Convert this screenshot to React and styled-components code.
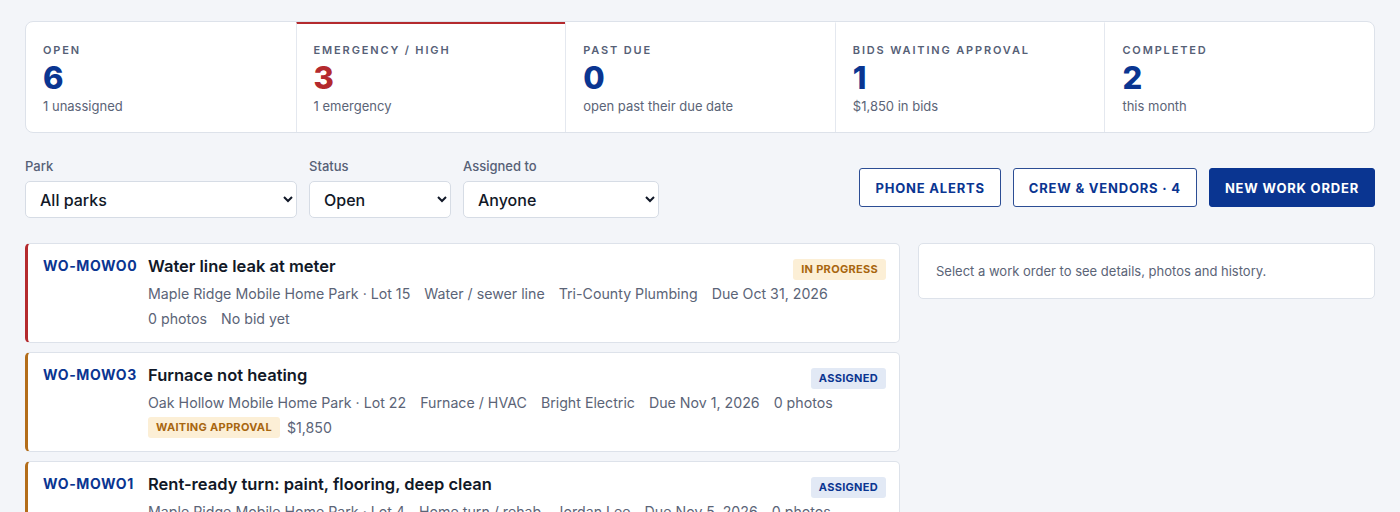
import React from 'react'
import styled, { createGlobalStyle } from 'styled-components'

const Global = createGlobalStyle`
  body {
    margin: 0;
    background: #f3f5f9;
    font-family: Inter, "Noto Sans", sans-serif;
    color: #111827;
  }
  * { box-sizing: border-box; }
`

const stats = [
  { label: 'Open', value: '6', sub: '1 unassigned' },
  { label: 'Emergency / High', value: '3', sub: '1 emergency', alert: true },
  { label: 'Past due', value: '0', sub: 'open past their due date' },
  { label: 'Bids waiting approval', value: '1', sub: '$1,850 in bids' },
  { label: 'Completed', value: '2', sub: 'this month' },
]

const orders = [
  {
    id: 'WO-MOWO0',
    title: 'Water line leak at meter',
    tone: 'red',
    status: { text: 'In progress', kind: 'warn' },
    meta: ['Maple Ridge Mobile Home Park · Lot 15', 'Water / sewer line', 'Tri-County Plumbing', 'Due Oct 31, 2026'],
    extra: [{ text: '0 photos' }, { text: 'No bid yet' }],
  },
  {
    id: 'WO-MOWO3',
    title: 'Furnace not heating',
    tone: 'orange',
    status: { text: 'Assigned', kind: 'info' },
    meta: ['Oak Hollow Mobile Home Park · Lot 22', 'Furnace / HVAC', 'Bright Electric', 'Due Nov 1, 2026', '0 photos'],
    extra: [{ badge: 'Waiting approval' }, { text: '$1,850' }],
  },
  {
    id: 'WO-MOWO1',
    title: 'Rent-ready turn: paint, flooring, deep clean',
    tone: 'orange',
    status: { text: 'Assigned', kind: 'info' },
    meta: ['Maple Ridge Mobile Home Park · Lot 4', 'Home turn / rehab', 'Jordan Lee', 'Due Nov 5, 2026', '0 photos'],
    extra: [{ text: 'No bid yet' }],
  },
]

const toneColors = { red: '#b42a2e', orange: '#b36d1a' }

const App = () => {
  return (
    <>
      <Global />
      <Page>
        <StatsCard>
          {stats.map((s) => (
            <StatCell key={s.label} $alert={s.alert}>
              <StatLabel>{s.label}</StatLabel>
              <StatValue $alert={s.alert}>{s.value}</StatValue>
              <StatSub>{s.sub}</StatSub>
            </StatCell>
          ))}
        </StatsCard>

        <Toolbar>
          <Filters>
            <Field>
              <FieldLabel>Park</FieldLabel>
              <Select $w={272} defaultValue="all">
                <option value="all">All parks</option>
              </Select>
            </Field>
            <Field>
              <FieldLabel>Status</FieldLabel>
              <Select $w={142} defaultValue="open">
                <option value="open">Open</option>
              </Select>
            </Field>
            <Field>
              <FieldLabel>Assigned to</FieldLabel>
              <Select $w={196} defaultValue="any">
                <option value="any">Anyone</option>
              </Select>
            </Field>
          </Filters>
          <Actions>
            <Button>Phone alerts</Button>
            <Button>Crew &amp; vendors · 4</Button>
            <Button $primary>New work order</Button>
          </Actions>
        </Toolbar>

        <Main>
          <List>
            {orders.map((o) => (
              <OrderCard key={o.id} $tone={toneColors[o.tone]}>
                <OrderId>{o.id}</OrderId>
                <OrderBody>
                  <OrderHead>
                    <OrderTitle>{o.title}</OrderTitle>
                    <Badge $kind={o.status.kind}>{o.status.text}</Badge>
                  </OrderHead>
                  <MetaRow>
                    {o.meta.map((m) => (
                      <span key={m}>{m}</span>
                    ))}
                  </MetaRow>
                  <MetaRow>
                    {o.extra.map((e, i) =>
                      e.badge ? (
                        <Badge key={i} $kind="warn" $inline>{e.badge}</Badge>
                      ) : (
                        <span key={i}>{e.text}</span>
                      )
                    )}
                  </MetaRow>
                </OrderBody>
              </OrderCard>
            ))}
          </List>
          <Detail>Select a work order to see details, photos and history.</Detail>
        </Main>
      </Page>
    </>
  )
}

export default App

const Page = styled.div`
  padding: 21px 25px 0;
  height: 512px;
  overflow: hidden;
`

const StatsCard = styled.div`
  display: grid;
  grid-template-columns: repeat(5, 1fr);
  background: #fff;
  border: 1px solid #dde2ea;
  border-radius: 8px;
  overflow: hidden;
`

const StatCell = styled.div`
  padding: 19px 17px 17px;
  border-left: 1px solid #e4e8ef;
  border-top: 3px solid ${(p) => (p.$alert ? '#b42a2e' : 'transparent')};
  margin-top: -1px;
  &:first-child { border-left: none; }
`

const StatLabel = styled.div`
  font-size: 11px;
  font-weight: 600;
  letter-spacing: 1.85px;
  text-transform: uppercase;
  color: #566076;
  line-height: 14px;
`

const StatValue = styled.div`
  font-size: 31px;
  font-weight: 800;
  line-height: 36px;
  margin-top: 3px;
  color: ${(p) => (p.$alert ? '#b42a2e' : '#0a3591')};
`

const StatSub = styled.div`
  font-size: 13px;
  color: #5b6477;
  line-height: 18px;
  margin-top: 1px;
`

const Toolbar = styled.div`
  display: flex;
  justify-content: space-between;
  align-items: flex-end;
  margin-top: 25px;
`

const Filters = styled.div`
  display: flex;
  gap: 12px;
`

const Field = styled.label`
  display: flex;
  flex-direction: column;
  gap: 6px;
`

const FieldLabel = styled.span`
  font-size: 13px;
  font-weight: 500;
  color: #566076;
  line-height: 17px;
`

const Select = styled.select`
  width: ${(p) => p.$w}px;
  height: 37px;
  padding: 0 10px 0 10px;
  border: 1px solid #d6dce5;
  border-radius: 5px;
  background: #fff;
  font-family: Inter, sans-serif;
  font-size: 16px;
  font-weight: 500;
  color: #111827;
`

const Actions = styled.div`
  display: flex;
  gap: 12px;
  margin-bottom: 11px;
`

const Button = styled.button`
  height: 39px;
  padding: 0 15px;
  border-radius: 3px;
  border: 1px solid ${(p) => (p.$primary ? '#0a3591' : '#2c4d94')};
  background: ${(p) => (p.$primary ? '#0a3591' : '#fff')};
  color: ${(p) => (p.$primary ? '#fff' : '#0a3591')};
  font-family: Inter, sans-serif;
  font-size: 13px;
  font-weight: 700;
  letter-spacing: 0.8px;
  text-transform: uppercase;
`

const Main = styled.div`
  display: grid;
  grid-template-columns: 875px 1fr;
  gap: 18px;
  align-items: start;
  margin-top: 25px;
`

const List = styled.div`
  display: flex;
  flex-direction: column;
  gap: 9px;
`

const OrderCard = styled.div`
  display: grid;
  grid-template-columns: 91px 1fr;
  gap: 14px;
  padding: 10px 13px 11px 15px;
  background: #fff;
  border: 1px solid #dde2ea;
  border-left: 3px solid ${(p) => p.$tone};
  border-radius: 5px;
`

const OrderId = styled.div`
  font-size: 14px;
  font-weight: 700;
  letter-spacing: 0.6px;
  white-space: nowrap;
  color: #0a3591;
  line-height: 20px;
  padding-top: 2px;
`

const OrderBody = styled.div`
  display: flex;
  flex-direction: column;
`

const OrderHead = styled.div`
  display: flex;
  justify-content: space-between;
  align-items: flex-start;
  height: 27px;
`

const OrderTitle = styled.div`
  font-size: 16.5px;
  font-weight: 600;
  line-height: 25px;
  color: #111827;
`

const Badge = styled.span`
  display: inline-block;
  padding: 3px 8px;
  margin-top: ${(p) => (p.$inline ? '0' : '5px')};
  border-radius: 3px;
  font-size: 11px;
  font-weight: 700;
  letter-spacing: 0.3px;
  line-height: 15px;
  text-transform: uppercase;
  background: ${(p) => (p.$kind === 'warn' ? '#fcefd6' : '#e2e9f5')};
  color: ${(p) => (p.$kind === 'warn' ? '#a8660f' : '#0a3591')};
`

const MetaRow = styled.div`
  display: flex;
  align-items: center;
  gap: 14px;
  height: 25px;
  font-size: 14.2px;
  color: #5b6477;
  white-space: nowrap;
  & ${Badge} + span { margin-left: -7px; }
`

const Detail = styled.div`
  background: #fff;
  border: 1px solid #dde2ea;
  border-radius: 5px;
  padding: 18px 17px;
  font-size: 13px;
  color: #5b6477;
  line-height: 18px;
`
